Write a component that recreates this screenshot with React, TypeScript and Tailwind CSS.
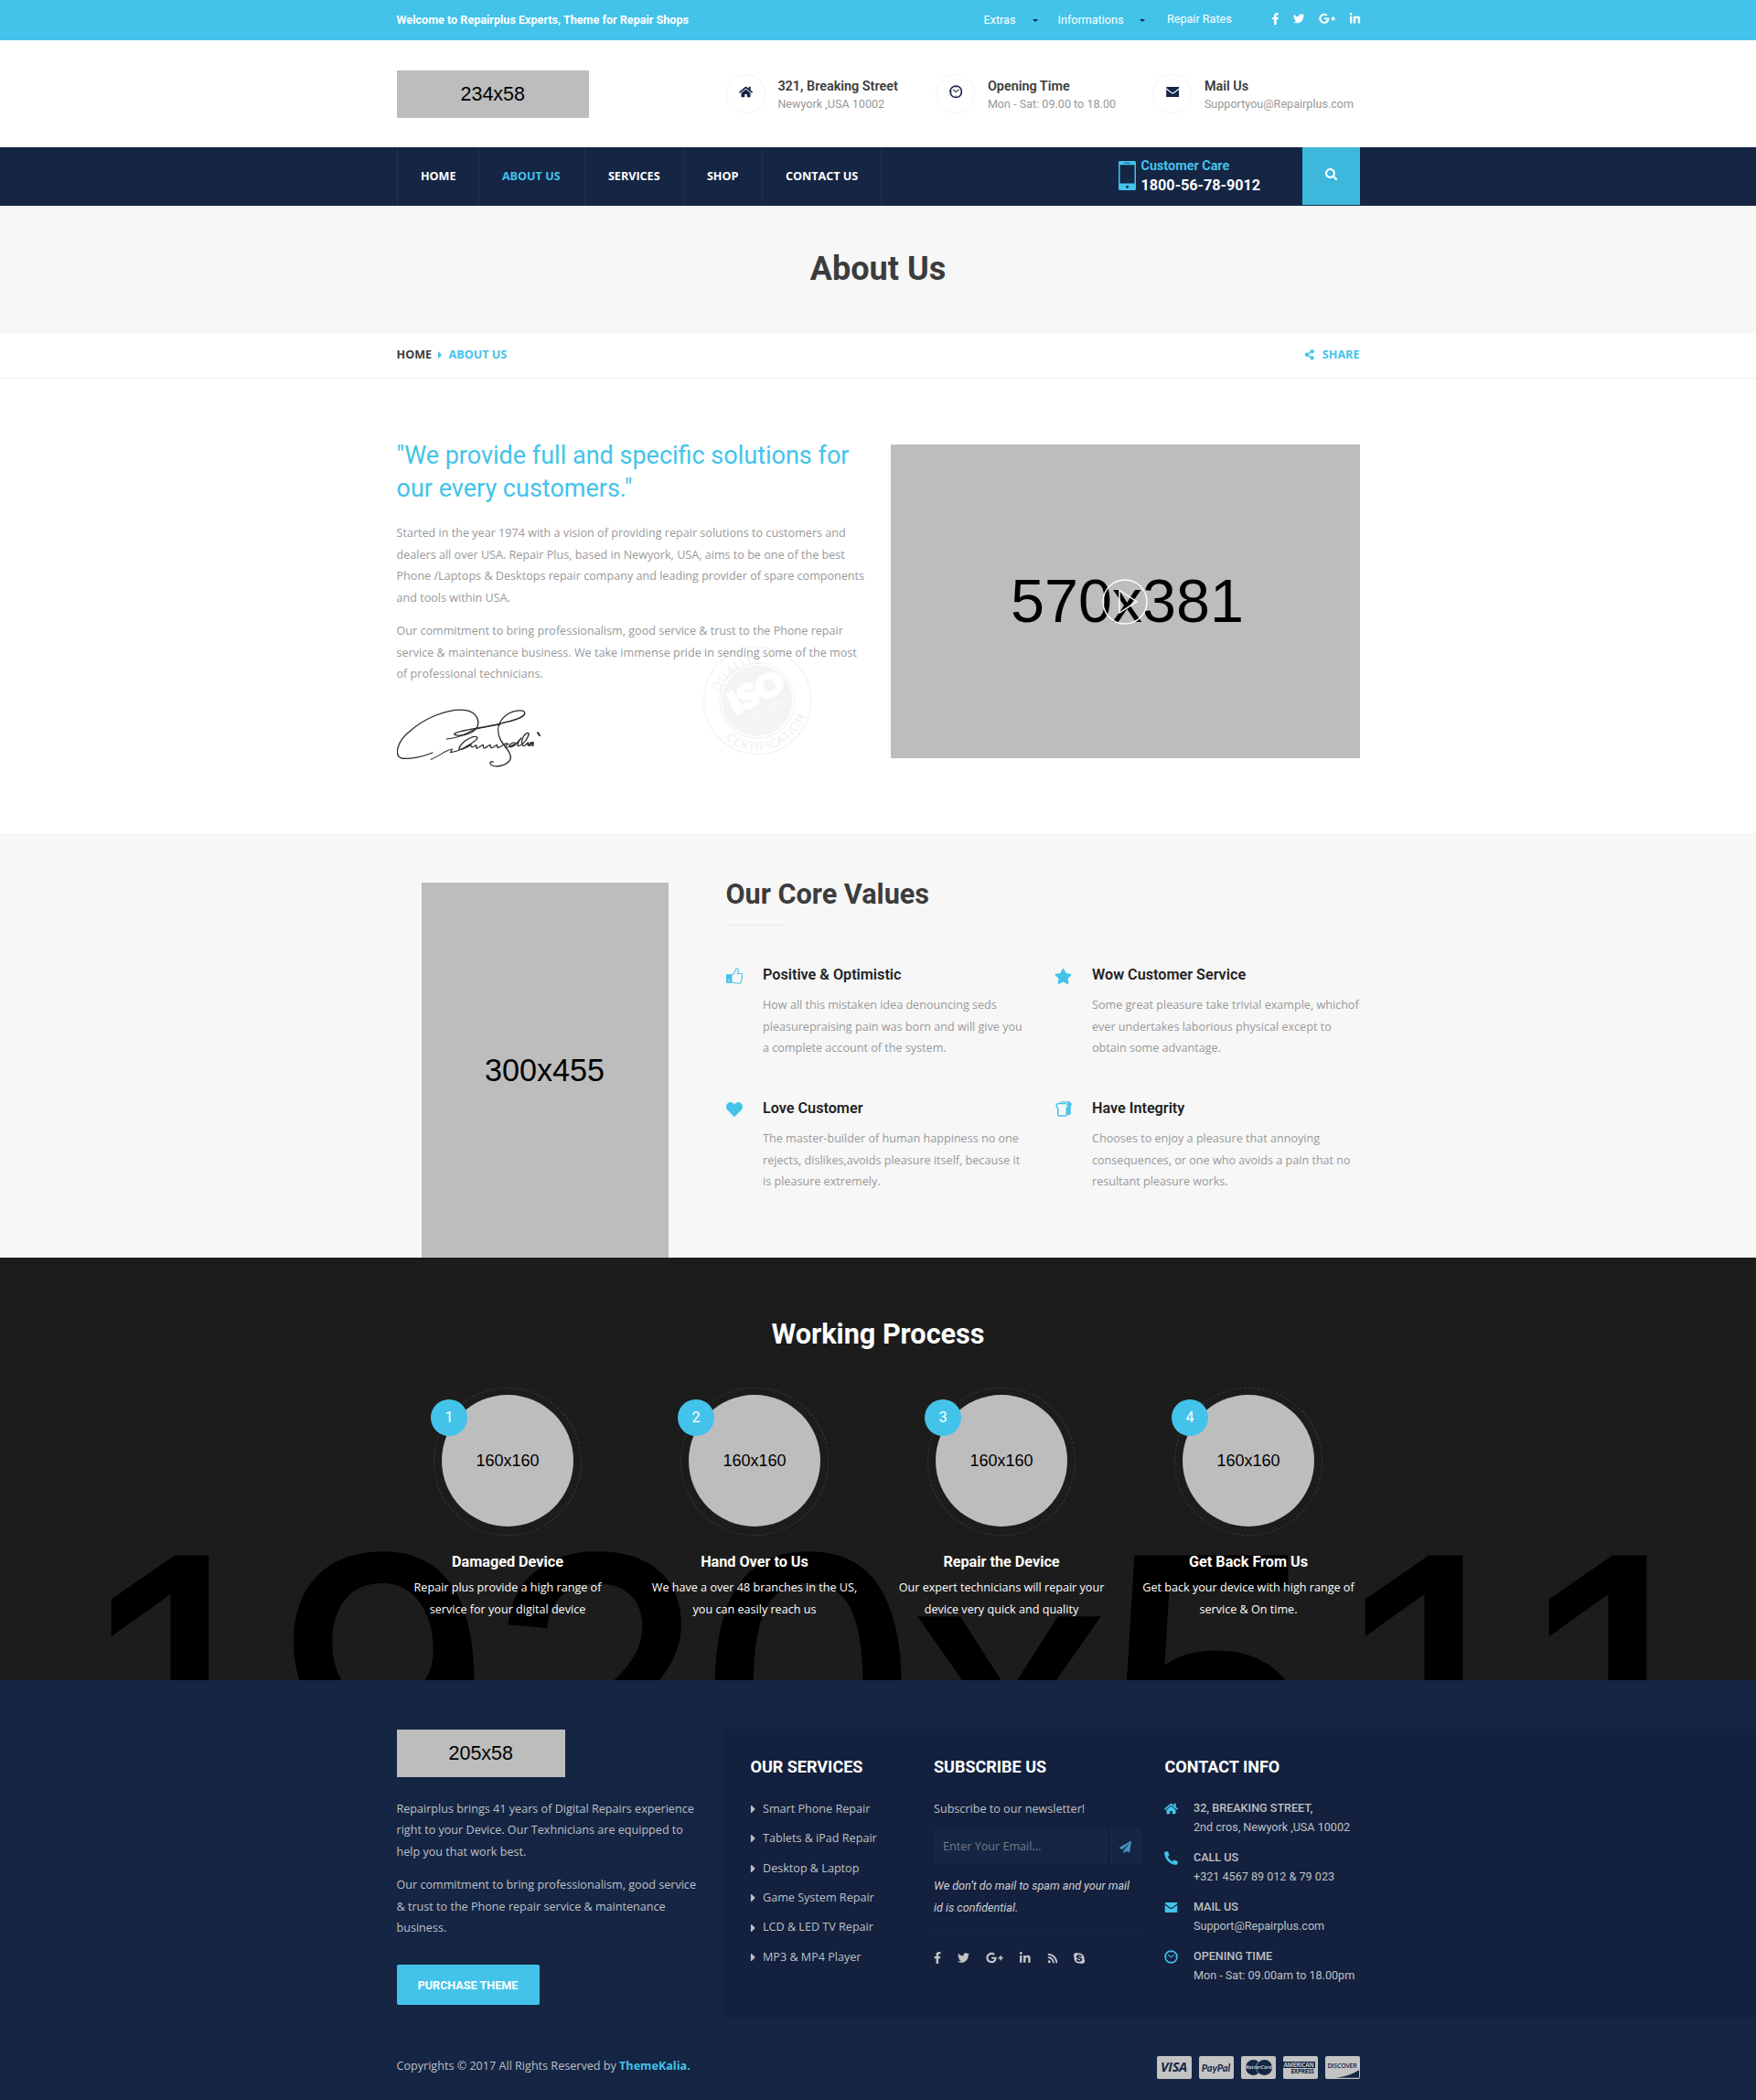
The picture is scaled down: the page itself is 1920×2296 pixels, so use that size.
import React from 'react';
import {
  FaCaretRight,
  FaFacebookF,
  FaGooglePlusG,
  FaHeart,
  FaHome,
  FaLinkedinIn,
  FaPaperPlane,
  FaRss,
  FaSearch,
  FaShareAlt,
  FaSkype,
  FaStar,
  FaTwitter,
} from 'react-icons/fa';

type IconProps = { className?: string };

function ClockIcon({ className }: IconProps) {
  return (
    <svg viewBox="0 0 16 16" className={className} fill="none" stroke="currentColor">
      <circle cx="8" cy="8" r="6.9" strokeWidth="1.7" />
      <path d="M4.300 5.400 8 8.400l3.700-3" strokeWidth="1.200" />
      <path d="M8 1.800v1.400M8 12.800v1.400M1.800 8h1.400M12.800 8h1.400" strokeWidth="0.900" />
    </svg>
  );
}

function CallIcon({ className }: IconProps) {
  return (
    <svg viewBox="0 0 15 15" className={className} fill="currentColor" stroke="currentColor" strokeWidth="0.600" strokeLinejoin="round">
      <path d="M1 .7 3.300.4c.4 0 .7.200.800.600l.9 3c.1.400 0 .700-.3.900L3.500 6c1.100 2.400 2.900 4.200 5.400 5.500l1.300-1.300c.3-.3.600-.4 1-.2l2.800 1.100c.4.200.6.500.5.900l-.5 2c-.1.400-.4.600-.8.600C6.300 14.600.5 8.800.4 1.500.4 1.100.6.800 1 .7z" />
    </svg>
  );
}

function MailIcon({ className }: IconProps) {
  return (
    <svg viewBox="0 0 16 13" className={className} fill="currentColor">
      <path d="M.8 0h14.4c.5 0 .8.3.8.8v.7L9.4 6.600c-.9.700-1.900.700-2.800 0L0 1.500V.8C0 .3.3 0 .8 0z" />
      <path d="M0 3.200 6 7.700c1.300.900 2.700.900 4 0l6-4.500v9c0 .5-.3.8-.8.8H.8c-.5 0-.8-.3-.8-.8z" />
    </svg>
  );
}

function ThumbIcon({ className }: IconProps) {
  return (
    <svg viewBox="0 0 19 18" className={className} fill="none" stroke="currentColor" strokeWidth="1.1" strokeLinejoin="round">
      <path d="M6 8.200C8.300 7.200 9 5 10.300 3.300 10.900 2.500 10.500.8 11.800.7c1.800 0 2.200 1.700 1.900 3-.2 1.100-.8 1.800-.9 2.700h4.100c1 0 1.600.8 1.400 1.800-.1.700-.4 1-.6 1.400.4.800.3 1.700-.3 2.400.3.900 0 1.600-.5 2.100.2 1.600-.7 3.200-2.600 3.300-3 .2-5-.7-8.300-1.500" />
      <path d="M.5 7.800H6v8.600H.5z" fill="currentColor" />
      <circle cx="3.200" cy="14" r="0.900" fill="#f7f7f7" stroke="none" />
    </svg>
  );
}

function SlicesIcon({ className }: IconProps) {
  return (
    <svg viewBox="0 0 18 17" className={className} fill="none" stroke="currentColor">
      <path d="M5.500.8h8.800c3.200 0 3.900 3.600 1.900 5v7.700c0 .7-.6 1.100-1.300 1.100h-1.600" strokeWidth="1" />
      <path d="M12.500.8h2c2.800.2 3.400 3.500 1.600 5v8.700h-3V8c1.800-2.200 1.500-5.500-.6-7.200z" fill="currentColor" stroke="none" />
      <path d="M3.200 2.600h7.600c3.100.2 3.600 3.500 1.500 5v7.200c0 .7-.4 1.200-1.200 1.200H3.900c-.8 0-1.200-.5-1.200-1.200V7.600c-2.400-1.500-2-4.800.5-5z" fill="#f7f7f7" strokeWidth="1.500" />
    </svg>
  );
}

function PhoneDeviceIcon({ className }: IconProps) {
  return (
    <svg viewBox="0 0 19 32" className={className}>
      <rect width="19" height="32" rx="1.500" fill="#43c3ea" />
      <rect x="1.500" y="4.300" width="16" height="20.200" fill="#152544" />
      <rect x="6" y="1.300" width="7" height="1.600" fill="#2a86b4" />
      <circle cx="9.500" cy="28.300" r="1.500" fill="#152544" />
    </svg>
  );
}

function Signature({ className }: IconProps) {
  return (
    <svg viewBox="0 0 158 64" className={className} fill="none" stroke="#2b2b2b" strokeLinecap="round" strokeLinejoin="round">
      <g transform="scale(.3444 .3333) translate(-40 -946)" strokeWidth="4">
        <path d="M153 1090c-36 15-76 22-98 18-26-8-13-58 25-88 50-45 120-75 175-70 45 5 50 45 35 62-15 18-55 26-68 18-4-10 78-20 143-35 45-10 80-20 81-35 1-15-46-10-68 15-23 25-18 55-8 75 15 25 35 40 30 62-10 23-60 30-64 13-1-5 6-7 10-5" />
        <path d="M197 1045c34-3 56-12 80-28 28-10 60-14 92-20" strokeWidth="3" />
        <path d="M148 1112c28-12 46-30 66-34 4 2-4 7-4 11" strokeWidth="3" />
        <path
          transform="translate(210 0) scale(1.18 1) translate(-210 0)"
          d="M210 1089c22-4 54-24 70-42 7-10-4-13-16-6-18 9-30 27-31 36 2 7 22-4 32-14-1 10 4 12 14 2 2 6-1 10 2 11 6-3 11-10 17-12 1 5-1 10 3 11 7-2 10-9 16-11 0 5 0 10 4 10 6-1 10-8 14-10l2 10c8 0 12-10 18-12 4-4 12-2 10 0-6 2-10 10-5 11 9 0 17-8 24-12 0-9-10-4-16 6 0 8 10 4 18-5l14-20c-6 10-12 22-8 26 16-4 26-26 29-40-2-7-14 0-18 18-2 12 0 20 4 22 6-2 8-10 12-12l-1 10c6-2 8-9 14-10-6-1-11 4-10 11 5 1 8-5 11-11l-1 12"
          strokeWidth="3.400"
        />
        <path d="M487 1024l6 9" strokeWidth="6" />
      </g>
    </svg>
  );
}

function IsoSeal({ className }: IconProps) {
  return (
    <svg viewBox="0 0 120 120" className={className} fontFamily="Lato, sans-serif">
      <defs>
        <path id="seal-top" d="M16.500 71A45 45 0 0 1 103 49" />
        <path id="seal-bottom" d="M17 93A53.500 53.500 0 0 0 113.500 60A53 53 0 0 0 108 36" />
      </defs>
      <circle cx="60" cy="60" r="58.500" fill="none" stroke="#f5f5f5" strokeWidth="1.500" />
      <circle cx="60" cy="60" r="41" fill="none" stroke="#f4f4f4" strokeWidth="1.500" />
      <circle cx="60" cy="60" r="38.500" fill="#f4f4f4" />
      <text fill="#f0f0f0" fontSize="13" letterSpacing="0.800">
        <textPath href="#seal-top" startOffset="20">QUALITY</textPath>
      </text>
      <text fill="#f0f0f0" fontSize="13" letterSpacing="1">
        <textPath href="#seal-bottom" startOffset="12">CERTIFICATION</textPath>
      </text>
      <g transform="rotate(-27 60 60)" textAnchor="middle">
        <text x="63" y="63" fontSize="33" fontWeight="900" fill="#ffffff" stroke="#ffffff" strokeWidth="3" strokeLinejoin="round" textLength="64" lengthAdjust="spacingAndGlyphs">ISO</text>
        <text x="61" y="78" fontSize="11" fill="#fafafa" textLength="48">9001:2008</text>
      </g>
    </svg>
  );
}

const navItems = [
  { label: 'HOME', width: 'w-[89px]' },
  { label: 'ABOUT US', width: 'w-[116px]', active: true },
  { label: 'SERVICES', width: 'w-[108px]' },
  { label: 'SHOP', width: 'w-[86px]' },
  { label: 'CONTACT US', width: 'w-[130px]' },
];

const headerInfo = [
  { icon: <FaHome className="size-[15px]" />, title: '321, Breaking Street', text: 'Newyork ,USA 10002', width: 'w-[229.500px]' },
  { icon: <ClockIcon className="ml-px size-[14.500px]" />, title: 'Opening Time', text: 'Mon - Sat: 09.00 to 18.00', width: 'w-[237px]' },
  { icon: <MailIcon className="ml-px h-[11.500px] w-[14.500px]" />, title: 'Mail Us', text: 'Supportyou@Repairplus.com', width: 'w-auto' },
];

const coreValues = [
  {
    icon: <ThumbIcon className="h-[18px] w-[18.500px]" />,
    title: 'Positive & Optimistic',
    lines: ['How all this mistaken idea denouncing seds', 'pleasurepraising pain was born and will give you', 'a complete account of the system.'],
  },
  {
    icon: <FaStar className="-ml-[0.500px] mt-px h-[17px] w-[19px]" />,
    title: 'Wow Customer Service',
    lines: ['Some great pleasure take trivial example, whichof', 'ever undertakes laborious physical except to', 'obtain some advantage.'],
  },
  {
    icon: <FaHeart className="size-[18px]" />,
    title: 'Love Customer',
    lines: ['The master-builder of human happiness no one', 'rejects, dislikes,avoids pleasure itself, because it', 'is pleasure extremely.'],
  },
  {
    icon: <SlicesIcon className="h-[17px] w-[18px]" />,
    title: 'Have Integrity',
    lines: ['Chooses to enjoy a pleasure that annoying', 'consequences, or one who avoids a pain that no', 'resultant pleasure works.'],
  },
];

const steps = [
  { title: 'Damaged Device', lines: ['Repair plus provide a high range of', 'service for your digital device'] },
  { title: 'Hand Over to Us', lines: ['We have a over 48 branches in the US,', 'you can easily reach us'] },
  { title: 'Repair the Device', lines: ['Our expert technicians will repair your', 'device very quick and quality'] },
  { title: 'Get Back From Us', lines: ['Get back your device with high range of', 'service & On time.'] },
];

const services = ['Smart Phone Repair', 'Tablets & iPad Repair', 'Desktop & Laptop', 'Game System Repair', 'LCD & LED TV Repair', 'MP3 & MP4 Player'];

const contacts = [
  { icon: <FaHome className="-ml-px h-[15px] w-[15px]" />, title: '32, BREAKING STREET,', text: '2nd cros, Newyork ,USA 10002' },
  { icon: <CallIcon className="-ml-px size-[15px]" />, title: 'CALL US', text: '+321 4567 89 012 & 79 023' },
  { icon: <MailIcon className="-ml-px h-[11px] w-[15px]" />, title: 'MAIL US', text: 'Support@Repairplus.com' },
  { icon: <ClockIcon className="-ml-px size-[15px]" />, title: 'OPENING TIME', text: 'Mon - Sat: 09.00am to 18.00pm' },
];

function Lines({ lines }: { lines: string[] }) {
  return (
    <>
      {lines.map((line) => (
        <span key={line} className="block whitespace-nowrap">
          {line}
        </span>
      ))}
    </>
  );
}

function Placeholder({ label, className }: { label: string; className: string }) {
  return (
    <div className={`flex shrink-0 items-center justify-center bg-[#bdbdbd] font-['Liberation_Sans',sans-serif] text-black ${className}`}>
      <span className="leading-none">{label}</span>
    </div>
  );
}

function TopBar() {
  return (
    <div className="h-[44px] bg-[#43c3ea] text-[12.6px] leading-[44px] text-white">
      <div className="mx-auto flex w-[1053px] whitespace-nowrap font-[Roboto,sans-serif]">
        <p className="w-[642px] font-bold">Welcome to Repairplus Experts, Theme for Repair Shops</p>
        <div className="flex w-[81px] items-center">
          <span>Extras</span>
          <i className="ml-[19px] border-x-[3px] border-t-[3px] border-x-transparent border-t-[#152544]" />
        </div>
        <div className="flex w-[119.500px] items-center">
          <span>Informations</span>
          <i className="ml-[18px] border-x-[3px] border-t-[3px] border-x-transparent border-t-[#152544]" />
        </div>
        <span className="w-[112px] leading-[42px]">Repair Rates</span>
        <div className="-mr-[1.500px] flex h-[41px] flex-1 items-center justify-between pl-[2px]">
          <FaFacebookF className="h-[13px] w-[9px]" />
          <FaTwitter className="size-[12.500px]" />
          <FaGooglePlusG className="size-[18.500px]" />
          <FaLinkedinIn className="size-[13px]" />
        </div>
      </div>
    </div>
  );
}

function Header() {
  return (
    <div className="h-[117px] bg-white">
      <div className="mx-auto flex w-[1053px] pt-[33px]">
        <Placeholder label="234x58" className="h-[52px] w-[210.500px] pt-[2px] text-[21.500px]" />
        <div className="ml-[149.500px] mt-[4px] flex whitespace-nowrap font-[Roboto,sans-serif]">
          {headerInfo.map((info) => (
            <div key={info.title} className={`flex ${info.width}`}>
              <span className="flex size-[43.200px] items-center justify-center rounded-full border border-[#f4f4f4] pb-[4px] text-[#152544]">{info.icon}</span>
              <div className="ml-[13.700px] mt-[4.400px]">
                <p className="text-[14.400px] font-semibold leading-[20px] text-[#3c3c3c]">{info.title}</p>
                <p className="-mt-[0.700px] text-[12.600px] leading-[18.500px] text-[#999]">{info.text}</p>
              </div>
            </div>
          ))}
        </div>
      </div>
    </div>
  );
}

function NavBar() {
  return (
    <div className="h-[64px] bg-[#152544]">
      <div className="mx-auto flex h-[63px] w-[1053px]">
        <nav className="flex border-l border-[#21314f] font-['Open_Sans',sans-serif] text-[12.600px] font-bold leading-[63px] text-white">
          {navItems.map((item) => (
            <a key={item.label} className={`border-r border-[#21314f] pl-[25.400px] ${item.width} ${item.active ? 'text-[#43c3ea]' : ''}`}>
              {item.label}
            </a>
          ))}
        </nav>
        <div className="ml-auto flex pt-[12px] font-[Roboto,sans-serif] font-bold">
          <PhoneDeviceIcon className="mt-[3px] h-[32px] w-[19px]" />
          <div className="ml-[6px] w-[176px]">
            <p className="text-[14.400px] leading-[18px] text-[#43c3ea]">Customer Care</p>
            <p className="text-[16.200px] leading-[24px] text-white">1800-56-78-9012</p>
          </div>
        </div>
        <button className="flex w-[63px] items-center justify-center bg-[#3eb7dd] pb-[4px] pl-px text-white">
          <FaSearch className="size-[13.500px]" />
        </button>
      </div>
    </div>
  );
}

function PageTitle() {
  return (
    <>
      <div className="h-[139px] bg-[#f7f7f7] text-center">
        <h1 className="font-[Roboto,sans-serif] text-[36px] font-bold leading-[139px] text-[#3c3c3c]">About Us</h1>
      </div>
      <div className="h-[50px] border-b border-[#eeeeee] bg-white">
        <div className="mx-auto flex w-[1053px] items-center font-['Open_Sans',sans-serif] text-[12.600px] font-bold leading-[48px] text-[#43c3ea]">
          <span className="text-[#3c3c3c]">HOME</span>
          <i className="ml-[7px] border-y-[4.500px] border-l-[4.500px] border-y-transparent border-l-[#43c3ea]" />
          <span className="ml-[7.500px]">ABOUT US</span>
          <FaShareAlt className="ml-auto size-[11.500px]" />
          <span className="ml-[8px]">SHARE</span>
        </div>
      </div>
    </>
  );
}

function Intro() {
  return (
    <section className="h-[497px] bg-white">
      <div className="mx-auto flex w-[1053px] justify-between">
        <div className="relative w-[514px] pt-[66px]">
          <IsoSeal className="absolute left-[334px] top-[292px] size-[120px]" />
          <div className="relative">
            <h2 className="font-[Roboto,sans-serif] text-[27px] leading-[36px] text-[#43c3ea]">
              <Lines lines={['"We provide full and specific solutions for', 'our every customers."']} />
            </h2>
            <div className="mt-[19.300px] space-y-[13.500px] font-['Open_Sans',sans-serif] text-[12.600px] leading-[23.400px] text-[#999]">
              <p>
                <Lines
                  lines={[
                    'Started in the year 1974 with a vision of providing repair solutions to customers and',
                    'dealers all over USA. Repair Plus, based in Newyork, USA, aims to be one of the best',
                    'Phone /Laptops & Desktops repair company and leading provider of spare components',
                    'and tools within USA.',
                  ]}
                />
              </p>
              <p>
                <Lines
                  lines={[
                    'Our commitment to bring professionalism, good service & trust to the Phone repair',
                    'service & maintenance business. We take immense pride in sending some of the most',
                    'of professional technicians.',
                  ]}
                />
              </p>
            </div>
            <Signature className="mt-[26.500px] h-[64px] w-[158px]" />
          </div>
        </div>
        <div className="relative mt-[72px]">
          <Placeholder label="570x381" className="h-[343px] w-[513px] pl-[5px] text-[66.500px]" />
          <svg viewBox="0 0 50 50" className="absolute left-[231px] top-[147px] size-[50px]" fill="none" stroke="#fff" strokeWidth="1.400">
            <circle cx="25" cy="25" r="24" />
            <path d="M19 12.500v24.500l19-12.300z" />
          </svg>
        </div>
      </div>
    </section>
  );
}

function CoreValues() {
  return (
    <section className="h-[464px] bg-[#f7f7f7]">
      <div className="mx-auto flex w-[1053px] pl-[27px]">
        <Placeholder label="300x455" className="mt-[54px] h-[410px] w-[270px] text-[34.200px]" />
        <div className="ml-[63px] pt-[47px]">
          <h2 className="font-[Roboto,sans-serif] text-[30.600px] font-bold leading-[40px] text-[#3c3c3c]">Our Core Values</h2>
          <div className="mt-[13px] h-px w-[63px] bg-[#e9e9e9]" />
          <div className="mt-[44px] grid grid-cols-[360px_360px]">
            {coreValues.map((value) => (
              <div key={value.title} className="flex h-[146px] gap-[21.500px]">
                <span className="mt-[2px] w-[19px] text-[#43c3ea]">{value.icon}</span>
                <div>
                  <h3 className="font-[Roboto,sans-serif] text-[16.200px] font-semibold leading-[20px] text-[#222]">{value.title}</h3>
                  <p className="mt-[11.100px] font-['Open_Sans',sans-serif] text-[12.600px] leading-[23.400px] text-[#999]">
                    <Lines lines={value.lines} />
                  </p>
                </div>
              </div>
            ))}
          </div>
        </div>
      </div>
    </section>
  );
}

function WorkingProcess() {
  return (
    <section className="relative h-[462px] overflow-hidden bg-[#1c1c1c] text-center text-white">
      <span className="absolute left-[84px] top-[262px] whitespace-nowrap font-['Liberation_Sans',sans-serif] text-[417px] leading-[417px] text-black [-webkit-text-stroke:5px_black]">
        <span className="tracking-[-12px]">1</span>920x<span className="tracking-[15px]">5</span>11
      </span>
      <div className="relative">
        <h2 className="pt-[64px] font-[Roboto,sans-serif] text-[30.600px] font-bold leading-[40px]">Working Process</h2>
        <div className="mx-auto mt-[37.500px] grid w-[1080px] grid-cols-4">
          {steps.map((step, i) => (
            <div key={step.title}>
              <div className="relative mx-auto flex size-[162px] items-center justify-center rounded-full border border-dashed border-[#3a3a3a] pb-px">
                <Placeholder label="160x160" className="size-[144px] rounded-full pb-px text-[18px]" />
                <span className="absolute -left-[4px] top-[12.500px] size-[40px] rounded-full bg-[#43c3ea] font-[Roboto,sans-serif] text-[16.200px] leading-[39px]">
                  {i + 1}
                </span>
              </div>
              <h3 className="mt-[18.500px] font-[Roboto,sans-serif] text-[16.200px] font-bold leading-[21px]">{step.title}</h3>
              <p className="mt-[6.300px] font-['Open_Sans',sans-serif] text-[12.600px] leading-[23.400px]">
                <Lines lines={step.lines} />
              </p>
            </div>
          ))}
        </div>
      </div>
    </section>
  );
}

function PaymentCards() {
  return (
    <div className="flex gap-[8px] text-[#152544] *:h-[25px] *:w-[38px] *:overflow-hidden *:rounded-[2px] *:bg-[#c3c3c3]">
      <div className="flex items-center justify-center font-['Open_Sans',sans-serif] text-[14.500px] font-bold italic leading-none tracking-[-0.300px]">VISA</div>
      <div className="flex items-center justify-center font-[Lato,sans-serif] text-[11px] font-bold italic leading-none">PayPal</div>
      <div className="relative flex items-center justify-center">
        <i className="absolute left-[5px] top-[4px] size-[17px] rounded-full bg-[#152544]" />
        <i className="absolute right-[4px] top-[4px] size-[17px] rounded-full bg-[#152544] ring-1 ring-[#c3c3c3]/60" />
        <span className="relative font-['Open_Sans',sans-serif] text-[5.500px] font-bold italic leading-none text-[#c3c3c3]">MasterCard</span>
      </div>
      <div className="flex flex-col justify-center font-['Open_Sans',sans-serif] text-[6.500px] font-bold leading-[7px] text-[#c3c3c3]">
        <span className="w-[35px] bg-[#152544] pl-px tracking-[-0.200px]">AMERICAN</span>
        <span className="ml-[8px] pl-px tracking-[-0.300px] text-[#152544]">EXPRESS</span>
      </div>
      <div className="relative pt-[7px] text-center font-['Open_Sans',sans-serif] text-[7px] font-semibold leading-[8px] tracking-[-0.200px]">
        DISCOVER
        <svg viewBox="0 0 26 9" className="absolute bottom-px right-px h-[9px] w-[25px]" fill="currentColor">
          <path d="M0 9C10 7.500 19 4.500 26 0v9z" />
        </svg>
      </div>
    </div>
  );
}

function Footer() {
  return (
    <footer className="h-[459px] bg-[#152544] font-['Open_Sans',sans-serif] text-[12.600px] text-[#bfc0c4]">
      <div className="flex pl-[433.500px] pt-[54px]">
        <div className="w-[360px]">
          <Placeholder label="205x58" className="h-[52px] w-[184.500px] pt-[2px] text-[21.500px]" />
          <div className="mt-[22.700px] space-y-[13.300px] leading-[23.400px]">
            <p>
              <Lines lines={['Repairplus brings 41 years of Digital Repairs experience', 'right to your Device. Our Texhnicians are equipped to', 'help you that work best.']} />
            </p>
            <p>
              <Lines lines={['Our commitment to bring professionalism, good service', '& trust to the Phone repair service & maintenance', 'business.']} />
            </p>
          </div>
          <button className="mt-[28.800px] block h-[44px] w-[156px] rounded-[2px] bg-[#43c3ea] font-[Roboto,sans-serif] font-bold leading-[45px] text-white">PURCHASE THEME</button>
        </div>
        <div className="flex h-[307px] flex-1 bg-[#13203e] pl-[27px] pt-[31px] shadow-[0_4px_6px_rgba(10,20,45,0.4)]">
          <div className="w-[200.500px]">
            <h3 className="font-[Roboto,sans-serif] text-[18px] font-bold leading-[20px] text-white">OUR SERVICES</h3>
            <ul className="mt-[19.700px] leading-[32.400px]">
              {services.map((service) => (
                <li key={service} className="flex items-center">
                  <FaCaretRight className="-ml-px h-[14px] w-[7px]" />
                  <span className="ml-[7.500px] whitespace-nowrap">{service}</span>
                </li>
              ))}
            </ul>
          </div>
          <div className="w-[252.500px]">
            <h3 className="font-[Roboto,sans-serif] text-[18px] font-bold leading-[20px] text-white">SUBSCRIBE US</h3>
            <p className="mt-[24px] leading-[23.400px]">Subscribe to our newsletter!</p>
            <div className="mt-[10.600px] flex h-[38px] gap-[4px]">
              <div className="w-[189px] border border-[#182a4c] bg-[#152544] pl-[9px] leading-[35px] text-[#757a85]">Enter Your Email...</div>
              <div className="flex w-[33px] items-center justify-center border border-[#182a4c] bg-[#152544]">
                <FaPaperPlane className="size-[13px] text-[#4a94c0]" />
              </div>
            </div>
            <p className="mt-[12.400px] font-[Roboto,sans-serif] italic leading-[23.400px] text-[#cfcfd2]">
              <Lines lines={['We don’t do mail to spam and your mail', 'id is confidential.']} />
            </p>
            <div className="mt-[13.600px] h-px w-[226px] bg-[#1a2a4a]" />
            <div className="mt-[20px] flex h-[18px] items-center text-[#c3c3c6]">
              <FaFacebookF className="h-[13px] w-[8px]" />
              <FaTwitter className="ml-[18px] size-[13px]" />
              <FaGooglePlusG className="ml-[18px] size-[19px]" />
              <FaLinkedinIn className="ml-[17px] size-[13.500px]" />
              <FaRss className="ml-[17px] size-[12px]" />
              <FaSkype className="ml-[16.500px] size-[14px]" />
            </div>
          </div>
          <div className="font-[Roboto,sans-serif]">
            <h3 className="text-[18px] font-bold leading-[20px] text-white">CONTACT INFO</h3>
            <div className="mt-[24px] leading-[21px]">
              {contacts.map((contact) => (
                <div key={contact.title} className="flex h-[54px] whitespace-nowrap">
                  <span className="flex h-[22px] w-[31.500px] items-center text-[#43c3ea]">{contact.icon}</span>
                  <div>
                    <p className="font-medium">{contact.title}</p>
                    <p>{contact.text}</p>
                  </div>
                </div>
              ))}
            </div>
          </div>
        </div>
      </div>
      <div className="mx-auto mt-[50px] flex w-[1053px] justify-between">
        <p className="mt-px leading-[20px]">
          Copyrights © 2017 All Rights Reserved by <span className="font-bold text-[#43c3ea]">ThemeKalia.</span>
        </p>
        <PaymentCards />
      </div>
    </footer>
  );
}

export default function App() {
  return (
    <div className="min-h-[2296px] w-[1920px] overflow-hidden bg-white">
      <TopBar />
      <Header />
      <NavBar />
      <PageTitle />
      <Intro />
      <CoreValues />
      <WorkingProcess />
      <Footer />
    </div>
  );
}
